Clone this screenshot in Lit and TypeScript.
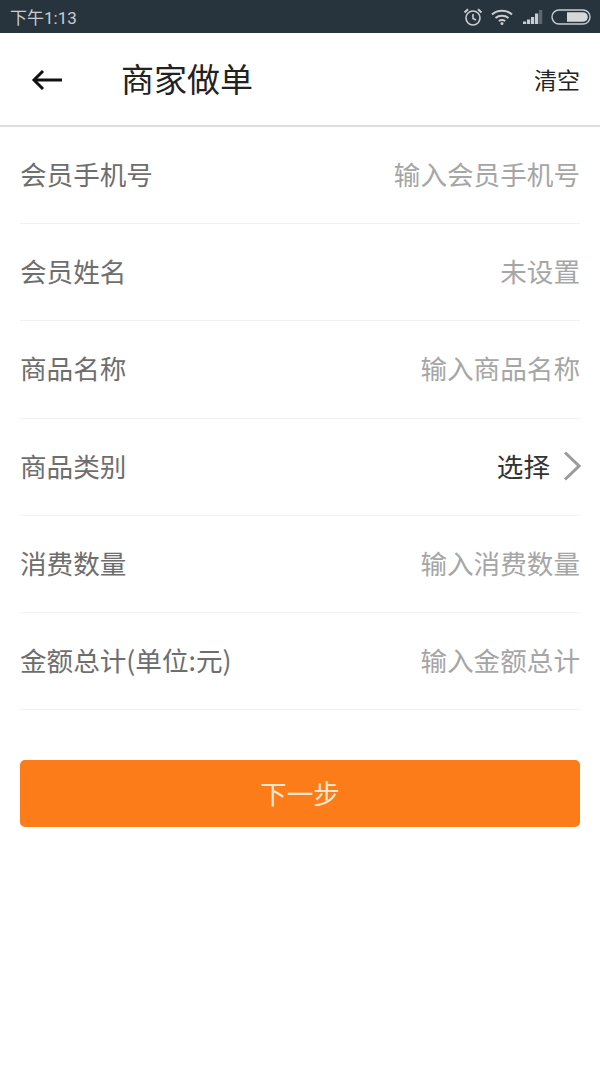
import { LitElement, html, css } from "lit";
import { customElement } from "lit/decorators.js";

const FONT = css`"Noto Sans CJK SC", "Noto Sans", sans-serif`;

const rows: { label: string; value: string; select?: boolean }[] = [
  { label: "会员手机号", value: "输入会员手机号" },
  { label: "会员姓名", value: "未设置" },
  { label: "商品名称", value: "输入商品名称" },
  { label: "商品类别", value: "选择", select: true },
  { label: "消费数量", value: "输入消费数量" },
  { label: "金额总计(单位:元)", value: "输入金额总计" },
];

@customElement("app-root")
export class AppRoot extends LitElement {
  static styles = css`
    :host {
      display: block;
      width: 600px;
      height: 1067px;
      background: #fff;
      font-family: ${FONT};
      overflow: hidden;
    }
    .status {
      height: 33px;
      background: #27343d;
      display: flex;
      align-items: center;
      justify-content: space-between;
      padding: 0 9px 0 10px;
      color: #c9cdd0;
      font-size: 17px;
      box-sizing: border-box;
    }
    .status .time { font-family: "Roboto", ${FONT}; }
    .status-icons { display: flex; align-items: center; }
    .status-icons svg { display: block; }
    .alarm { margin-right: 8px; }
    .wifi { margin-right: 9px; }
    .signal { margin-right: 8px; }
    .bar {
      height: 92px;
      display: flex;
      align-items: center;
      border-bottom: 2px solid #dfdfdf;
      padding: 0 20px 0 31px;
      color: #222;
    }
    .bar svg { display: block; flex: none; margin: 2px 58px 0 0; }
    .title { font-size: 33px; flex: 1; line-height: 1; margin-bottom: 2px; }
    .clear { font-size: 23px; line-height: 1; }
    .form { padding: 0 20px; }
    .row {
      height: 93.2px;
      padding-bottom: 3px;
      border-bottom: 1px solid #f1f1f1;
      display: flex;
      align-items: center;
      justify-content: space-between;
      font-size: 26.6px;
      color: #6e6e6e;
    }
    .row .value { color: #a6a6a6; }
    .row .select { display: flex; align-items: center; gap: 13px; color: #333; }
    .row .select svg { display: block; margin: 1px -1px 0 0; }
    .next {
      display: block;
      width: 560px;
      height: 67px;
      margin: 50px 20px 0;
      background: #fb7c18;
      color: #fde6d2;
      border: 0;
      border-radius: 5px;
      font-family: ${FONT};
      font-size: 26.6px;
      padding: 0 0 2px;
    }
  `;

  render() {
    return html`
      <div class="status">
        <span class="time">下午1:13</span>
        <div class="status-icons">
          <svg class="alarm" width="20" height="20" viewBox="0 0 20 20" fill="none" stroke="#c9cdd0" stroke-width="1.6">
            <circle cx="10" cy="11" r="7"></circle>
            <path d="M10 7v4.500l3 1.500"></path>
            <path d="M1.500 5.500 5 2.200M18.500 5.500 15 2.200" stroke-width="2"></path>
          </svg>
          <svg class="wifi" width="22" height="18" viewBox="0 0 22 18" fill="none" stroke="#c9cdd0" stroke-width="2">
            <path d="M1 6.500C6.500 1.500 15.500 1.500 21 6.500"></path>
            <path d="M4.500 10C8 7 14 7 17.500 10"></path>
            <path d="M7.800 13C9.600 11.800 12.400 11.800 14.200 13"></path>
            <circle cx="11" cy="15.500" r="1.500" fill="#c9cdd0" stroke="none"></circle>
          </svg>
          <svg class="signal" width="21" height="16" viewBox="0 0 21 16">
            <path d="M1 12.500h3.200V15H1zM5 10.500h3.200V15H5zM9 8h3.200v7H9zM13 4.500h3.200V15H13z" fill="#c9cdd0"></path>
            <path d="M17 1h3.200v14H17z" fill="#5d676e"></path>
          </svg>
          <svg width="40" height="16" viewBox="0 0 40 16">
            <rect x="1" y="1" width="38" height="14" rx="7" fill="none" stroke="#c9cdd0" stroke-width="1.400"></rect>
            <path d="M16 3.200H32a4.800 4.800 0 0 1 0 9.600H16z" fill="#d5d8da"></path>
          </svg>
        </div>
      </div>
      <div class="bar">
        <svg width="32" height="22" viewBox="0 0 32 22" fill="none" stroke="#111" stroke-width="3">
          <path d="M31 11H3"></path>
          <path d="M12 2 3 11l9 9"></path>
        </svg>
        <span class="title">商家做单</span>
        <span class="clear">清空</span>
      </div>
      <div class="form">
        ${rows.map(
          (r) => html`
            <div class="row">
              <span>${r.label}</span>
              ${r.select
                ? html`<span class="select"
                    >${r.value}
                    <svg width="18" height="30" viewBox="0 0 18 30" fill="none" stroke="#9b9b9b" stroke-width="3">
                      <path d="M2 1.500 16 15 2 28.500"></path>
                    </svg></span
                  >`
                : html`<span class="value">${r.value}</span>`}
            </div>
          `
        )}
      </div>
      <button class="next">下一步</button>
    `;
  }
}
